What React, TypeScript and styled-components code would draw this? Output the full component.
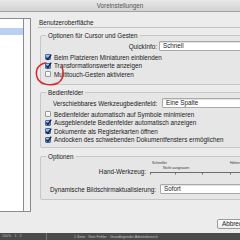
import React from "react";
import styled, { createGlobalStyle } from "styled-components";

const Global = createGlobalStyle`
  html, body { margin: 0; padding: 0; width: 240px; height: 240px; overflow: hidden; background: #ececec; }
  body { font-family: "Liberation Sans", "DejaVu Sans", Arial, sans-serif; color: #1b1b1b; }
  #root { width: 240px; height: 240px; }
`;

const Screen = styled.div`
  position: relative;
  width: 240px;
  height: 240px;
  overflow: hidden;
  background: #ececec;
`;

const Window = styled.div`
  width: 280px;
  height: 240px;
  display: flex;
  flex-direction: column;
`;

const TitleBar = styled.div`
  flex: none;
  height: 11px;
  width: 240px;
  background: linear-gradient(#e8e8e8, #d2d2d2);
  border-bottom: 1px solid #a3a3a3;
  display: flex;
  align-items: center;
  justify-content: center;
  font-size: 6.3px;
  color: #555;
`;

const Body = styled.div`
  flex: none;
  height: 200px;
  display: flex;
  padding-top: 6px;
  box-sizing: border-box;
`;

const Sidebar = styled.div`
  flex: none;
  width: 24px;
  height: 194px;
  background: #fff;
  border: 1px solid #8c8c8c;
  border-left: none;
  box-sizing: border-box;
  padding-top: 2px;
`;

const ListItem = styled.div<{ $active?: boolean }>`
  height: 7px;
  background: ${(p) => (p.$active ? "#b8d0f4" : "transparent")};
`;

const ScrollTrack = styled.div`
  flex: none;
  width: 7px;
  height: 194px;
  background: #f6f6f6;
  border: 1px solid #8c8c8c;
  border-left: none;
  box-sizing: border-box;
`;

const Content = styled.div`
  flex: 1;
  margin-left: 7px;
  padding-top: 1px;
  display: flex;
  flex-direction: column;
`;

const Heading = styled.div`
  height: 8px;
  line-height: 8px;
  font-size: 6.3px;
  padding-left: 1px;
  border-bottom: 1px solid #c2c2c2;
`;

const Group = styled.fieldset<{ $mt: number; $pt: number; $pb: number }>`
  margin: ${(p) => p.$mt}px 0 0 2px;
  padding: ${(p) => p.$pt}px 0 ${(p) => p.$pb}px 3px;
  border: 1px solid #c6c6c6;
  border-radius: 2px;
  background: #e6e6e6;
  min-width: 0;
`;

const Legend = styled.legend`
  padding: 0 2px;
  margin-left: 2px;
  height: 7px;
  line-height: 7px;
  font-size: 6.3px;
`;

const FieldRow = styled.div<{ $mt?: number }>`
  display: flex;
  align-items: center;
  height: 10px;
  margin-top: ${(p) => p.$mt ?? 0}px;
`;

const FieldLabel = styled.div<{ $w: number; $align: "left" | "right"; $indent?: number }>`
  flex: none;
  width: ${(p) => p.$w}px;
  box-sizing: border-box;
  padding-left: ${(p) => p.$indent ?? 0}px;
  text-align: ${(p) => p.$align};
  font-size: 6.3px;
  white-space: nowrap;
`;

const Select = styled.div<{ $ml: number }>`
  flex: 1;
  height: 10px;
  margin-left: ${(p) => p.$ml}px;
  box-sizing: border-box;
  background: #fff;
  border: 1px solid #a9a9a9;
  border-radius: 1px;
  box-shadow: inset 0 1px 0 #e2e2e2;
  font-size: 6.3px;
  line-height: 8px;
  padding-left: 3px;
`;

const CheckRow = styled.div<{ $mt?: number }>`
  display: flex;
  align-items: center;
  height: 8.5px;
  margin-top: ${(p) => p.$mt ?? 0}px;
  font-size: 6.3px;
  white-space: nowrap;
`;

const Box = styled.span<{ $checked: boolean }>`
  flex: none;
  width: 6px;
  height: 6px;
  margin-left: 1px;
  margin-right: 3px;
  box-sizing: border-box;
  border: 1px solid ${(p) => (p.$checked ? "#4d6c9c" : "#9a9a9a")};
  border-radius: 1px;
  background: ${(p) =>
    p.$checked ? "linear-gradient(#a9c8f2, #4b86d6)" : "linear-gradient(#ffffff, #ececec)"};
  display: flex;
  align-items: center;
  justify-content: center;
  overflow: visible;
`;

const Check = ({ checked, label, mt }: { checked: boolean; label: string; mt?: number }) => (
  <CheckRow $mt={mt}>
    <Box $checked={checked}>
      {checked && (
        <svg width="7" height="7" viewBox="0 0 7 7" style={{ overflow: "visible" }}>
          <path d="M1.2 3.6 L2.9 5.4 L6.2 0.6" fill="none" stroke="#14213a" strokeWidth="1.3" />
        </svg>
      )}
    </Box>
    {label}
  </CheckRow>
);

const SliderRow = styled.div`
  display: flex;
  align-items: flex-end;
  height: 16px;
`;

const SliderArea = styled.div`
  flex: 1;
  margin-left: 4px;
  display: flex;
  flex-direction: column;
`;

const TickLabels = styled.div`
  display: flex;
  height: 6px;
  align-items: center;
  font-size: 3.6px;
  color: #333;
`;

const TickLabel = styled.span<{ $w: number; $pl?: number }>`
  flex: none;
  width: ${(p) => p.$w}px;
  padding-left: ${(p) => p.$pl ?? 0}px;
  white-space: nowrap;
`;

const MidLabel = styled.div`
  height: 5px;
  line-height: 5px;
  padding-left: 13px;
  font-size: 3.6px;
  color: #333;
  white-space: nowrap;
`;

const HandLabel = styled.div`
  flex: none;
  width: 102px;
  text-align: right;
  font-size: 6.3px;
  line-height: 6px;
  height: 6px;
  margin-bottom: 1px;
`;

const Footer = styled.div`
  flex: none;
  height: 21px;
  display: flex;
  align-items: center;
  padding-left: 217px;
`;

const Button = styled.div`
  height: 10px;
  width: 40px;
  box-sizing: border-box;
  border: 1px solid #9a9a9a;
  border-radius: 2px;
  background: linear-gradient(#ffffff, #ededed);
  font-size: 6.3px;
  line-height: 8px;
  padding-left: 4px;
  margin-top: 2px;
`;

const Taskbar = styled.div`
  flex: none;
  height: 7px;
  width: 240px;
  background: #4b4b4b;
  display: flex;
  align-items: center;
  font-size: 3.6px;
  color: #b9b9b9;
  white-space: nowrap;
`;

const TaskLeft = styled.div`
  width: 47px;
  padding-left: 2px;
  border-right: 1px solid #777;
  height: 7px;
  line-height: 7px;
  box-sizing: border-box;
`;

const TaskText = styled.div`
  padding-left: 27px;
  color: #c4c4c4;
`;

const Annotation = styled.svg`
  position: absolute;
  left: 0;
  top: 0;
  pointer-events: none;
`;

export default function App() {
  return (
    <Screen>
      <Global />
      <Window>
        <TitleBar>Voreinstellungen</TitleBar>
        <Body>
          <Sidebar>
            <ListItem />
            <ListItem $active />
          </Sidebar>
          <ScrollTrack />
          <Content>
            <Heading>Benutzeroberfläche</Heading>
            <Group $mt={3.5} $pt={2.5} $pb={5.5}>
              <Legend>Optionen für Cursor und Gesten</Legend>
              <FieldRow>
                <FieldLabel $w={113} $align="right">QuickInfo:</FieldLabel>
                <Select $ml={2}>Schnell</Select>
              </FieldRow>
              <Check mt={2} checked label="Beim Platzieren Miniaturen einblenden" />
              <Check checked label="Transformationswerte anzeigen" />
              <Check checked={false} label="Multitouch-Gesten aktivieren" />
            </Group>
            <Group $mt={3.5} $pt={2.5} $pb={3}>
              <Legend>Bedienfelder</Legend>
              <FieldRow>
                <FieldLabel $w={116} $align="left" $indent={9}>
                  Verschiebbares Werkzeugbedienfeld:
                </FieldLabel>
                <Select $ml={2}>Eine Spalte</Select>
              </FieldRow>
              <Check mt={2} checked={false} label="Bedienfelder automatisch auf Symbole minimieren" />
              <Check checked label="Ausgeblendete Bedienfelder automatisch anzeigen" />
              <Check checked label="Dokumente als Registerkarten öffnen" />
              <Check checked label="Andocken des schwebenden Dokumentfensters ermöglichen" />
            </Group>
            <Group $mt={4.5} $pt={0.5} $pb={5}>
              <Legend>Optionen</Legend>
              <SliderRow>
                <HandLabel>Hand-Werkzeug:</HandLabel>
                <SliderArea>
                  <TickLabels>
                    <TickLabel $w={78} $pl={2}>Schneller</TickLabel>
                    <TickLabel $w={40}>Höhere Qualität</TickLabel>
                  </TickLabels>
                  <MidLabel>Nicht ausgrauen</MidLabel>
                  <svg width="130" height="5" viewBox="0 0 130 5">
                    <line x1="0" y1="1.5" x2="130" y2="1.5" stroke="#6b6b6b" strokeWidth="1" />
                    <line x1="0.5" y1="1" x2="0.5" y2="3.5" stroke="#6b6b6b" strokeWidth="1" />
                    <line x1="25.5" y1="1" x2="25.5" y2="3.5" stroke="#6b6b6b" strokeWidth="1" />
                    <line x1="52.5" y1="1" x2="52.5" y2="3.5" stroke="#6b6b6b" strokeWidth="1" />
                    <line x1="80.5" y1="1" x2="80.5" y2="3.5" stroke="#6b6b6b" strokeWidth="1" />
                  </svg>
                </SliderArea>
              </SliderRow>
              <FieldRow $mt={8}>
                <FieldLabel $w={115} $align="left" $indent={6}>
                  Dynamische Bildschirmaktualisierung:
                </FieldLabel>
                <Select $ml={1}>Sofort</Select>
              </FieldRow>
            </Group>
          </Content>
        </Body>
        <Footer>
          <Button>Abbrechen</Button>
        </Footer>
        <Taskbar>
          <TaskLeft>100% · 1 · 2</TaskLeft>
          <TaskText>1 Seite · Kein Fehler · Grundlegender Arbeitsbereich</TaskText>
        </Taskbar>
      </Window>
      <Annotation width="240" height="240" viewBox="0 0 240 240">
        <path
          d="M46 63 C38 64 35 70 37 77 C39 84 50 87 58 83 C64 79 64 72 62 67"
          fill="none"
          stroke="#d7262c"
          strokeWidth="1.5"
          strokeLinecap="round"
        />
      </Annotation>
    </Screen>
  );
}
